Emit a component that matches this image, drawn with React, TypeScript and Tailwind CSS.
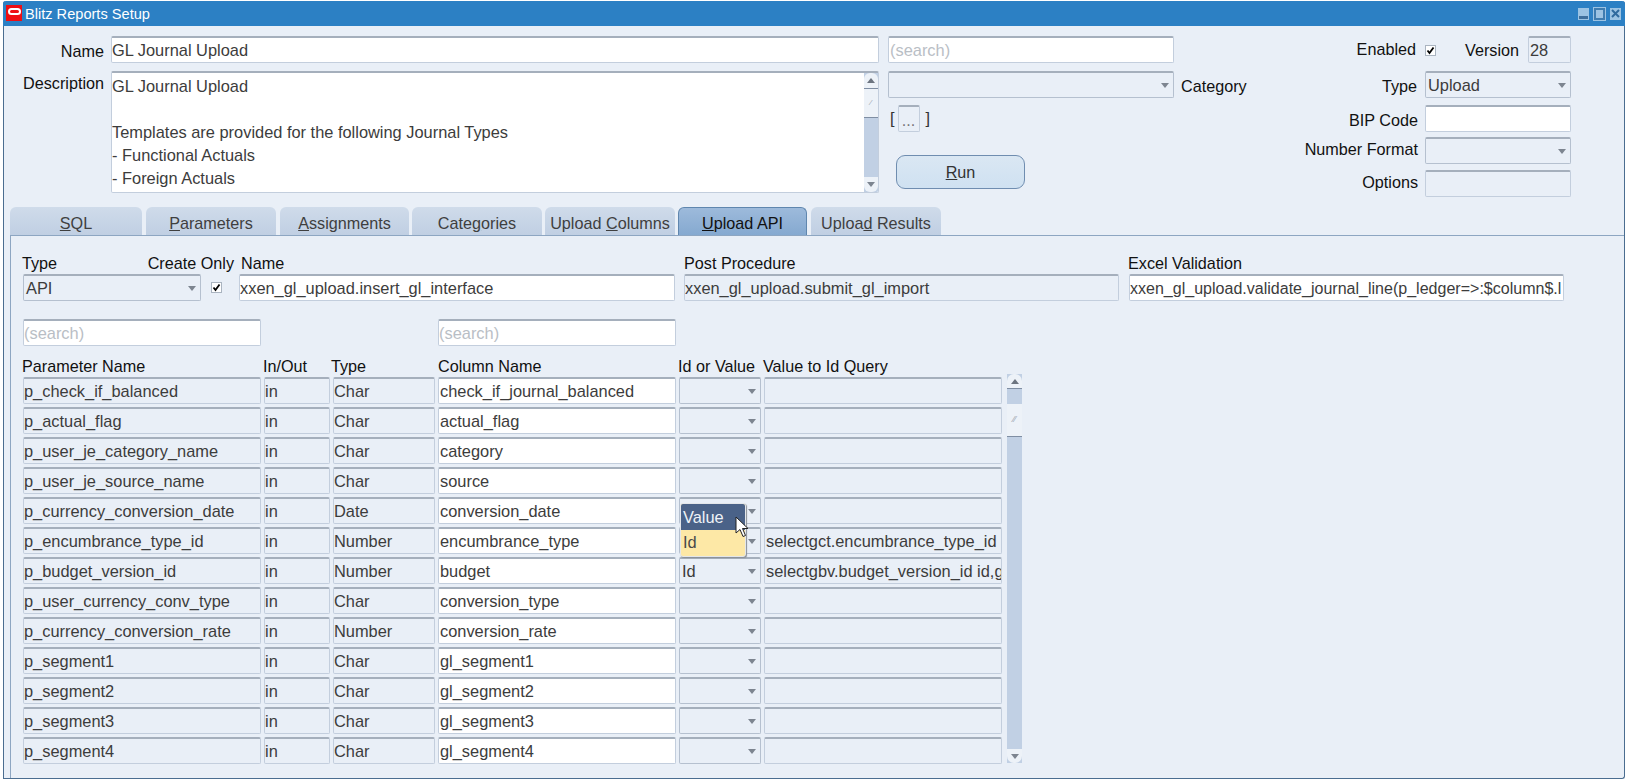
// Blitz Reports Setup - Oracle Forms window
import type { ReactNode } from "react";

const panelBg = "bg-[#e9eff7]";

function Field({ value, white, className = "", muted }: { value?: string; white?: boolean; className?: string; muted?: boolean }) {
  return (
    <div
      className={`h-[27px] shrink-0 overflow-hidden whitespace-nowrap rounded-[2px] border border-[#c3cedd] border-t-2 border-t-[#a5afbc] text-[16.4px] leading-[24px] ${white ? "bg-white" : "bg-[#e9eff7]"} ${muted ? "text-[#b9bec5]" : "text-[#3c3c3c]"} ${className}`}
    >
      {value}
    </div>
  );
}

function Arrow() {
  return (
    <svg width="8" height="5" viewBox="0 0 8 5" className="shrink-0">
      <polygon points="0,0 8,0 4,5" fill="#7d8590" />
    </svg>
  );
}

function Select({ value, className = "" }: { value?: string; className?: string }) {
  return (
    <div
      className={`flex h-[27px] shrink-0 items-center justify-between rounded-[2px] border border-[#b5c0cf] border-t-2 border-t-[#a5afbc] pl-[2px] pr-[4px] text-[16.4px] text-[#3c3c3c] ${panelBg} ${className}`}
    >
      <span>{value}</span>
      <Arrow />
    </div>
  );
}

function Check() {
  return (
    <div className="flex h-[11px] w-[11px] shrink-0 items-center justify-center border border-[#aab4c0] bg-white">
      <svg width="9" height="9" viewBox="0 0 9 9">
        <path d="M1.5 4.5 L3.5 7 L7.5 1.5" fill="none" stroke="#000" strokeWidth="1.8" />
      </svg>
    </div>
  );
}

function Tab({ label, className, active }: { label: ReactNode; className: string; active?: boolean }) {
  return (
    <div
      className={`flex h-[28px] items-center justify-center rounded-t-[6px] pt-[4px] ${active ? "border-x border-t border-[#5f86ae] bg-gradient-to-b from-[#9dbadb] to-[#85a9d0] text-[#111]" : "bg-gradient-to-b from-[#cfdbea] to-[#c0cfe3] text-[#3f3f3f]"} ${className}`}
    >
      {label}
    </div>
  );
}

const rows = [
  ["p_check_if_balanced", "in", "Char", "check_if_journal_balanced", "", ""],
  ["p_actual_flag", "in", "Char", "actual_flag", "", ""],
  ["p_user_je_category_name", "in", "Char", "category", "", ""],
  ["p_user_je_source_name", "in", "Char", "source", "", ""],
  ["p_currency_conversion_date", "in", "Date", "conversion_date", "", ""],
  ["p_encumbrance_type_id", "in", "Number", "encumbrance_type", "", "selectgct.encumbrance_type_id"],
  ["p_budget_version_id", "in", "Number", "budget", "Id", "selectgbv.budget_version_id id,g"],
  ["p_user_currency_conv_type", "in", "Char", "conversion_type", "", ""],
  ["p_currency_conversion_rate", "in", "Number", "conversion_rate", "", ""],
  ["p_segment1", "in", "Char", "gl_segment1", "", ""],
  ["p_segment2", "in", "Char", "gl_segment2", "", ""],
  ["p_segment3", "in", "Char", "gl_segment3", "", ""],
  ["p_segment4", "in", "Char", "gl_segment4", "", ""],
];

const gridCols = "grid grid-cols-[238px_66px_102px_238px_82px_238px] gap-x-[3px]";

export default function App() {
  return (
    <div className="h-[784px] w-[1627px] overflow-hidden bg-white text-[16.2px] text-[#111]" style={{ fontFamily: '"Liberation Sans", Arial, sans-serif' }}>
      <div className={`ml-[3px] mt-[1px] flex h-[778px] w-[1622px] flex-col rounded-t-[3px] rounded-br-[3px] border-x border-b border-[#4a6d90] ${panelBg}`}>
        {/* Title bar */}
        <div className="-mx-px flex h-[25px] shrink-0 items-center justify-between rounded-t-[3px] bg-[#2c80c4] pl-[3px] pr-[4px]">
          <div className="flex items-center gap-[3px]">
            <div className="flex h-[16px] w-[16px] items-start justify-center bg-[#ee0f14] pt-[3px]">
              <div className="h-[7px] w-[13px] rounded-full border-2 border-white" />
            </div>
            <span className="mt-[3px] text-[14.6px] text-white">Blitz Reports Setup</span>
          </div>
          <div className="flex items-center gap-[5px]">
            <div className="flex h-[12px] w-[11px] items-end bg-[#9cc3e3] p-[1px]">
              <div className="h-[3px] w-full bg-[#3f6f9c]" />
            </div>
            <div className="h-[12px] w-[11px] border-2 border-[#3f7cb0] bg-[#9cc3e3] outline outline-1 outline-[#9cc3e3]" />
            <div className="flex h-[12px] w-[11px] items-center justify-center bg-[#9cc3e3]">
              <svg width="9" height="9" viewBox="0 0 9 9">
                <path d="M1 1 L8 8 M8 1 L1 8" stroke="#2f6a9e" strokeWidth="2" />
              </svg>
            </div>
          </div>
        </div>

        {/* Header form */}
        <div className="flex h-[181px] shrink-0 pt-[10px]">
          <div className="w-[107px] shrink-0 pr-[7px] text-right">
            <div className="h-[34px] pt-[3px]">Name</div>
            <div className="pt-[1px]">Description</div>
          </div>
          <div className="w-[768px] shrink-0">
            <Field white value="GL Journal Upload" className="w-full" />
            <div className="mt-[8px] flex h-[122px] overflow-hidden rounded-[2px] border border-[#c3cedd] border-t-2 border-t-[#a5afbc] bg-white text-[16.4px] text-[#3c3c3c]">
              <div className="flex-1 whitespace-pre-line pt-[2px] leading-[23px]">
                {"GL Journal Upload\n\nTemplates are provided for the following Journal Types\n- Functional Actuals\n- Foreign Actuals"}
              </div>
              <div className="flex w-[14px] shrink-0 flex-col bg-[#c1d0e4]">
                <div className="flex h-[16px] items-center justify-center rounded-t-[6px] border-b border-[#7f8ea3] bg-[#edf2f8]">
                  <svg width="8" height="5" viewBox="0 0 8 5"><polygon points="4,0 8,5 0,5" fill="#6d7580" /></svg>
                </div>
                <div className="flex h-[29px] items-center justify-center border-b border-[#7f8ea3] bg-[#edf2f8] text-[8px] text-[#9aa3ae]">⁄</div>
                <div className="flex-1" />
                <div className="flex h-[15px] items-center justify-center rounded-b-[6px] bg-[#edf2f8]">
                  <Arrow />
                </div>
              </div>
            </div>
          </div>
          <div className="ml-[9px] w-[286px] shrink-0">
            <Field white muted value="(search)" className="w-full pl-[1px]" />
            <div className="relative mt-[8px]">
              <Select className="w-full" />
              <span className="absolute left-[293px] top-[3px]">Category</span>
            </div>
            <div className="mt-[7px] flex h-[27px] items-center text-[#333]">
              <span className="ml-[2px] mr-[3px]">[</span>
              <div className="flex h-[27px] w-[22px] items-center justify-center rounded-[2px] border border-[#c3cedd] border-t-2 border-t-[#a5afbc] pt-[3px] text-[#777]">...</div>
              <span className="ml-[6px]">]</span>
            </div>
            <div className="ml-[8px] mt-[23px] flex h-[34px] w-[129px] items-center justify-center rounded-[9px] border border-[#6f8db0] bg-gradient-to-b from-[#dae7f3] to-[#cfe1f1] text-[#333]">
              <span><u>R</u>un</span>
            </div>
          </div>
          <div className="ml-auto mr-[53px] flex w-[347px] shrink-0 flex-col">
            <div className="flex h-[27px] items-center">
              <span className="-mt-[1px] w-[192px] text-right">Enabled</span>
              <div className="ml-[9px] mt-px"><Check /></div>
              <span className="ml-[29px] mt-[2px] w-[56px]">Version</span>
              <Field value="28" className="ml-auto w-[43px] pl-[1px]" />
            </div>
            <div className="mt-[8px] flex items-center justify-end gap-[8px]">
              <span className="mt-[3px]">Type</span>
              <Select value="Upload" className="w-[146px]" />
            </div>
            <div className="mt-[7px] flex items-center justify-end gap-[7px]">
              <span className="mt-[2px]">BIP Code</span>
              <Field white className="w-[146px]" />
            </div>
            <div className="mt-[5px] flex items-center justify-end gap-[7px]">
              <span className="-mt-[3px]">Number Format</span>
              <Select className="w-[146px]" />
            </div>
            <div className="mt-[6px] flex items-center justify-end gap-[7px]">
              <span className="-mt-[3px]">Options</span>
              <Field className="w-[146px]" />
            </div>
          </div>
        </div>

        {/* Tabs */}
        <div className="flex shrink-0 gap-[3px] pl-[6px]">
          <Tab className="mr-px w-[132px]" label={<span><u>S</u>QL</span>} />
          <Tab className="mr-px w-[130px]" label={<span><u>P</u>arameters</span>} />
          <Tab className="w-[129px]" label={<span><u>A</u>ssignments</span>} />
          <Tab className="w-[130px]" label={<span>Cate<u>g</u>ories</span>} />
          <Tab className="w-[130px]" label={<span>Upload <u>C</u>olumns</span>} />
          <Tab active className="mr-px w-[129px]" label={<span><u>U</u>pload API</span>} />
          <Tab className="w-[130px]" label={<span>Uploa<u>d</u> Results</span>} />
        </div>

        {/* Upload API panel */}
        <div className="ml-[6px] flex-1 border-l border-t border-[#8da6c2] pl-[12px] pt-[15px]">
          <div className="flex">
            <div className="w-[213px] shrink-0">
              <div className="flex h-[23px] justify-between pr-[2px]">
                <span className="-ml-px">Type</span>
                <span>Create Only</span>
              </div>
              <div className="flex items-center">
                <Select value="API" className="w-[178px]" />
                <div className="ml-[10px]"><Check /></div>
              </div>
            </div>
            <div className="ml-[3px] w-[436px] shrink-0">
              <div className="h-[23px] pl-[2px]">Name</div>
              <Field white value="xxen_gl_upload.insert_gl_interface" className="w-full" />
            </div>
            <div className="ml-[9px] w-[435px] shrink-0">
              <div className="h-[23px]">Post Procedure</div>
              <Field value="xxen_gl_upload.submit_gl_import" className="w-full" />
            </div>
            <div className="ml-[10px] w-[435px] shrink-0">
              <div className="-ml-px h-[23px]">Excel Validation</div>
              <Field white value="xxen_gl_upload.validate_journal_line(p_ledger=>:$column$.l" className="w-full !text-[16.05px]" />
            </div>
          </div>

          <div className={`mt-[18px] ${gridCols}`}>
            <Field white muted value="(search)" />
            <div className="col-span-2" />
            <Field white muted value="(search)" />
          </div>

          <div className="flex">
            <div>
              <div className={`mt-[8px] h-[23px] ${gridCols}`}>
                <span className="-ml-px">Parameter Name</span>
                <span className="-ml-px">In/Out</span>
                <span className="-ml-[2px]">Type</span>
                <span className="whitespace-nowrap">Column Name</span>
                <span className="-ml-px whitespace-nowrap">Id or Value</span>
                <span className="-ml-[1px] whitespace-nowrap">Value to Id Query</span>
              </div>
              <div className={`${gridCols} gap-y-[3px]`}>
                {rows.map((r) => (
                  <div key={r[0]} className="contents">
                    <Field value={r[0]} />
                    <Field value={r[1]} />
                    <Field value={r[2]} />
                    <Field white value={r[3]} className="pl-[1px]" />
                    <div className="relative">
                      <Select value={r[4]} />
                      {r[0] === "p_currency_conversion_date" && (
                        <>
                          <div className="absolute left-[1px] top-[6px] z-10 w-[66px] overflow-hidden rounded-[3px] border border-[#e3e6ea] bg-[#fde8a6] text-[16.4px] shadow-[1px_1px_1px_#8a8f96]">
                            <div className="h-[26px] bg-[#4a6288] pl-[2px] leading-[27px] text-[#eef2f7]">Value</div>
                            <div className="h-[26px] pl-[2px] leading-[25px] text-[#4a4a4a]">Id</div>
                          </div>
                          <svg width="15" height="22" viewBox="0 0 15 22" className="absolute left-[56px] top-[19px] z-20">
                            <path d="M1 1 L1 17 L5 13.5 L8 20.5 L10.5 19.5 L7.5 12.5 L13 12.5 Z" fill="#fff" stroke="#222" strokeWidth="1" />
                          </svg>
                        </>
                      )}
                    </div>
                    <Field value={r[5]} className="pl-[1px]" />
                  </div>
                ))}
              </div>
            </div>
            {/* Table scrollbar */}
            <div className="ml-[5px] mt-[28px] flex h-[389px] w-[15px] flex-col bg-[#c1d0e4]">
              <div className="flex h-[15px] items-center justify-center rounded-t-[7px] border-b border-[#7f8ea3] bg-[#edf2f8]">
                <svg width="8" height="5" viewBox="0 0 8 5"><polygon points="4,0 8,5 0,5" fill="#6d7580" /></svg>
              </div>
              <div className="mt-[15px] flex h-[33px] items-center justify-center border-b border-[#7f8ea3] bg-[#edf2f8] text-[9px] text-[#9aa3ae]">⁄⁄</div>
              <div className="flex-1" />
              <div className="flex h-[14px] items-center justify-center rounded-b-[7px] bg-[#edf2f8]">
                <Arrow />
              </div>
            </div>
          </div>
        </div>
      </div>
    </div>
  );
}
